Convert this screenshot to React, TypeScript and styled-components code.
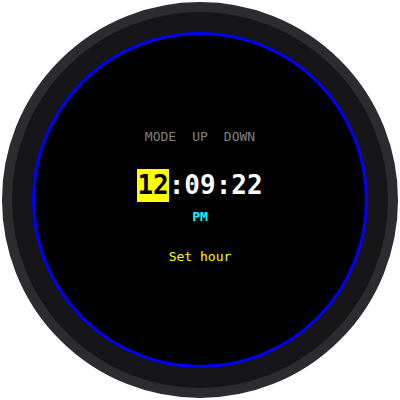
import React from 'react';
import styled, { createGlobalStyle } from 'styled-components';

const GlobalStyle = createGlobalStyle`
  html, body {
    margin: 0;
    padding: 0;
    background: #ffffff;
  }
  body {
    font-family: "DejaVu Sans Mono", "Liberation Mono", monospace;
  }
`;

const Watch = styled.div`
  box-sizing: border-box;
  width: 396px;
  height: 396px;
  margin: 2px;
  border-radius: 50%;
  border: 10px solid #2c2b30;
  background: #161618;
  padding: 20px;
  display: flex;
`;

const Face = styled.div`
  flex: 1;
  border-radius: 50%;
  border: 3px solid #0000ff;
  background: #000000;
  display: flex;
  flex-direction: column;
  align-items: center;
  justify-content: center;
  padding-bottom: 6px;
`;

const Controls = styled.div`
  display: flex;
  gap: 16px;
  font-size: 13px;
  line-height: 16px;
  color: #808080;
`;

const Time = styled.div`
  margin-top: 24px;
  display: flex;
  font-size: 26px;
  font-weight: bold;
  line-height: 33px;
  color: #ffffff;
`;

const Segment = styled.span<{ $active?: boolean }>`
  display: inline-block;
  height: 33px;
  background: ${(p) => (p.$active ? '#ffff00' : 'transparent')};
  color: ${(p) => (p.$active ? '#000000' : '#ffffff')};
`;

const Meridiem = styled.div`
  margin-top: 7px;
  font-size: 13px;
  font-weight: bold;
  line-height: 16px;
  color: #00ffff;
`;

const Hint = styled.div`
  margin-top: 24px;
  font-size: 13px;
  line-height: 16px;
  color: #ffff00;
`;

const App: React.FC = () => {
  const active = 'hour';
  return (
    <>
      <GlobalStyle />
      <Watch>
        <Face>
          <Controls>
            <span>MODE</span>
            <span>UP</span>
            <span>DOWN</span>
          </Controls>
          <Time>
            <Segment $active={active === 'hour'}>12</Segment>
            <Segment>:</Segment>
            <Segment>09</Segment>
            <Segment>:</Segment>
            <Segment>22</Segment>
          </Time>
          <Meridiem>PM</Meridiem>
          <Hint>Set hour</Hint>
        </Face>
      </Watch>
    </>
  );
};

export default App;
